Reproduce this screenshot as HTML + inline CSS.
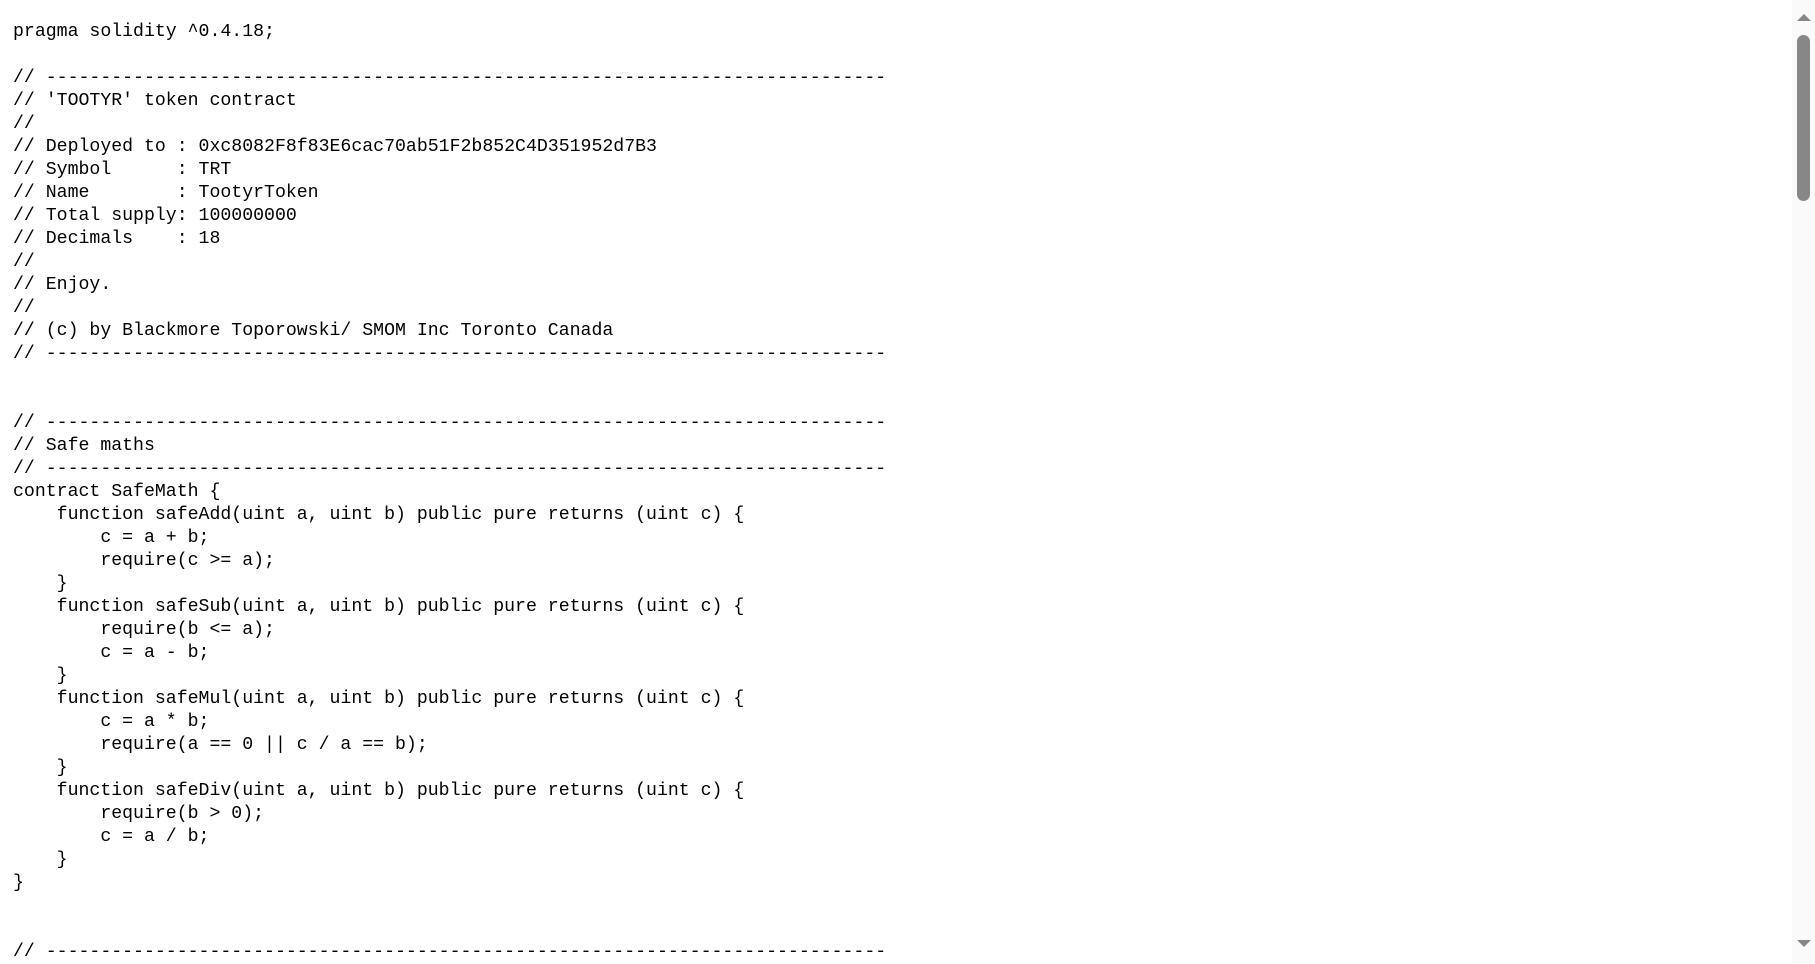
<!DOCTYPE html>
<html><head><style>
html,body{margin:0;padding:0;background:#fff;overflow:hidden;width:1815px;height:963px}
pre{position:absolute;left:13px;top:21px;margin:0;font-family:"Liberation Mono",monospace;font-size:18.2px;line-height:23px;color:#000}
.track{position:absolute;left:1792px;top:0;width:23px;height:963px;background:#fafafa}
.thumb{position:absolute;left:1797px;top:35px;width:13px;height:166px;border-radius:7px;background:#878787}
.up{position:absolute;left:1797px;top:14px;width:0;height:0;border-left:7px solid transparent;border-right:7px solid transparent;border-bottom:7px solid #878787}
.dn{position:absolute;left:1797px;top:940px;width:0;height:0;border-left:7px solid transparent;border-right:7px solid transparent;border-top:7px solid #878787}
</style></head><body>
<pre>pragma solidity ^0.4.18;

// -----------------------------------------------------------------------------
// 'TOOTYR' token contract
//
// Deployed to : 0xc8082F8f83E6cac70ab51F2b852C4D351952d7B3
// Symbol      : TRT
// Name        : TootyrToken
// Total supply: 100000000
// Decimals    : 18
//
// Enjoy.
//
// (c) by Blackmore Toporowski/ SMOM Inc Toronto Canada
// -----------------------------------------------------------------------------


// -----------------------------------------------------------------------------
// Safe maths
// -----------------------------------------------------------------------------
contract SafeMath {
    function safeAdd(uint a, uint b) public pure returns (uint c) {
        c = a + b;
        require(c >= a);
    }
    function safeSub(uint a, uint b) public pure returns (uint c) {
        require(b <= a);
        c = a - b;
    }
    function safeMul(uint a, uint b) public pure returns (uint c) {
        c = a * b;
        require(a == 0 || c / a == b);
    }
    function safeDiv(uint a, uint b) public pure returns (uint c) {
        require(b > 0);
        c = a / b;
    }
}


// -----------------------------------------------------------------------------
</pre>
<div class="track"></div><div class="up"></div><div class="thumb"></div><div class="dn"></div>
</body></html>
